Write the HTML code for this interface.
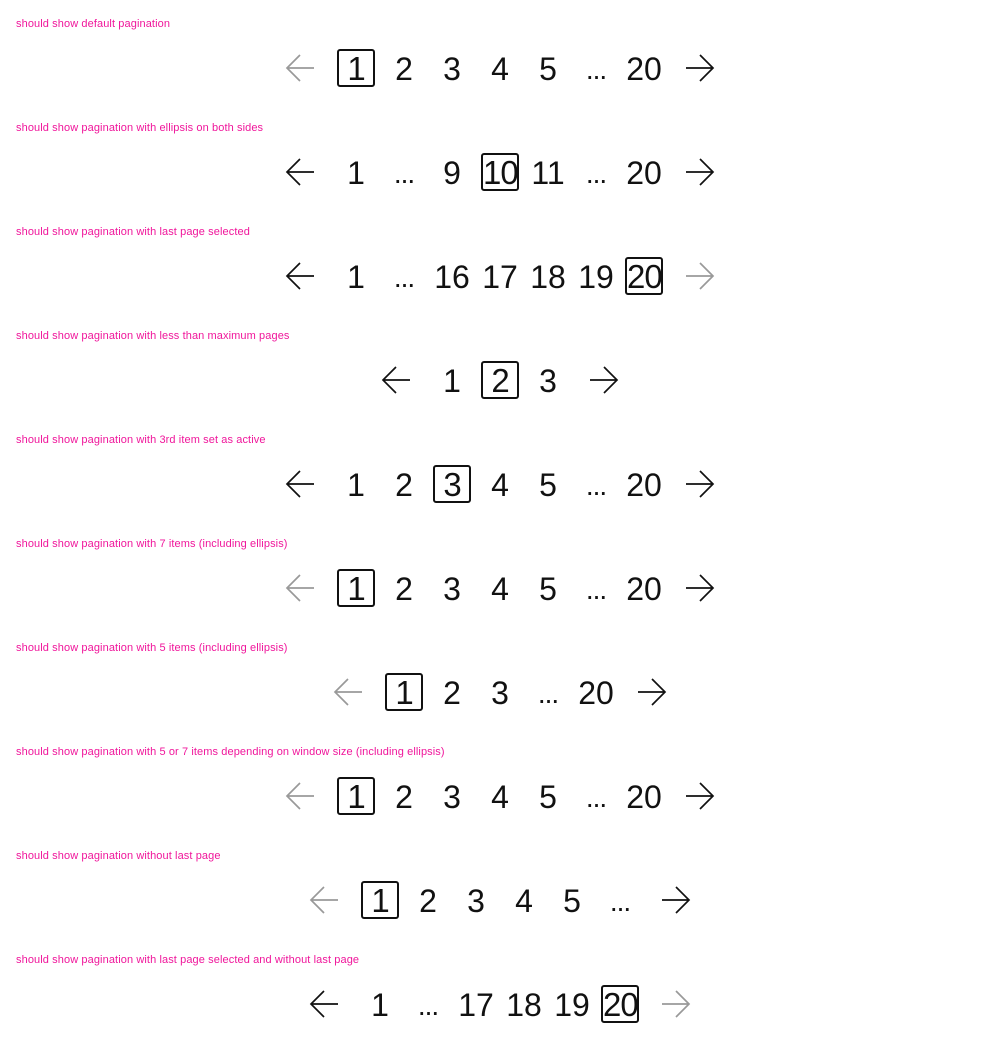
<!DOCTYPE html>
<html><head><meta charset="utf-8"><style>
body{margin:0;background:#fff;width:1000px;height:1040px;overflow:hidden;font-family:"Liberation Sans",sans-serif}
.sec{height:104px;position:relative}
.lab{position:absolute;left:16px;top:18px;font-size:11px;color:#f0169b;letter-spacing:0.1px;white-space:nowrap}
.row{position:absolute;top:44px;left:0;width:1000px;display:flex;justify-content:center;height:48px}
.ar{width:64px;height:48px;display:flex;align-items:center;justify-content:center}
.it{width:48px;height:48px;display:flex;align-items:center;justify-content:center;font-size:32px;color:#111}
.it span{display:inline-block;line-height:48px;padding-top:2px}
.it.e span{font-size:28px;letter-spacing:-1px;padding-top:4px}
.it.a span{border:2px solid #111;border-radius:3px;width:34px;height:34px;line-height:36px;text-align:center;padding-top:0;letter-spacing:-1px;font-size:33px}
</style></head><body>
<svg width="0" height="0" style="position:absolute"><defs>
<symbol id="l" viewBox="0 0 30 30"><path d="M29 15H2M15 2L2 15L15 28" fill="none" stroke="currentColor" stroke-width="1.7"/></symbol>
<symbol id="r" viewBox="0 0 30 30"><path d="M1 15H28M15 2L28 15L15 28" fill="none" stroke="currentColor" stroke-width="1.7"/></symbol>
</defs></svg>
<div id="c"></div>
<script>
var rows=[
["should show default pagination",0,["1","2","3","4","5","...","20"],0,1],
["should show pagination with ellipsis on both sides",1,["1","...","9","10","11","...","20"],3,1],
["should show pagination with last page selected",1,["1","...","16","17","18","19","20"],6,0],
["should show pagination with less than maximum pages",1,["1","2","3"],1,1],
["should show pagination with 3rd item set as active",1,["1","2","3","4","5","...","20"],2,1],
["should show pagination with 7 items (including ellipsis)",0,["1","2","3","4","5","...","20"],0,1],
["should show pagination with 5 items (including ellipsis)",0,["1","2","3","...","20"],0,1],
["should show pagination with 5 or 7 items depending on window size (including ellipsis)",0,["1","2","3","4","5","...","20"],0,1],
["should show pagination without last page",0,["1","2","3","4","5","..."],0,1],
["should show pagination with last page selected and without last page",1,["1","...","17","18","19","20"],5,0]];
var h="";
rows.forEach(function(r){
h+='<div class="sec"><div class="lab">'+r[0]+'</div><div class="row">';
h+='<div class="ar" style="color:'+(r[1]?'#111':'#999')+'"><svg width="30" height="30"><use href="#l"/></svg></div>';
r[2].forEach(function(t,i){h+='<div class="it'+(i==r[3]?' a':'')+(t=='...'?' e':'')+'"><span>'+t+'</span></div>';});
h+='<div class="ar" style="color:'+(r[4]?'#111':'#999')+'"><svg width="30" height="30"><use href="#r"/></svg></div>';
h+='</div></div>';});
document.getElementById('c').innerHTML=h;
</script>
</body></html>
